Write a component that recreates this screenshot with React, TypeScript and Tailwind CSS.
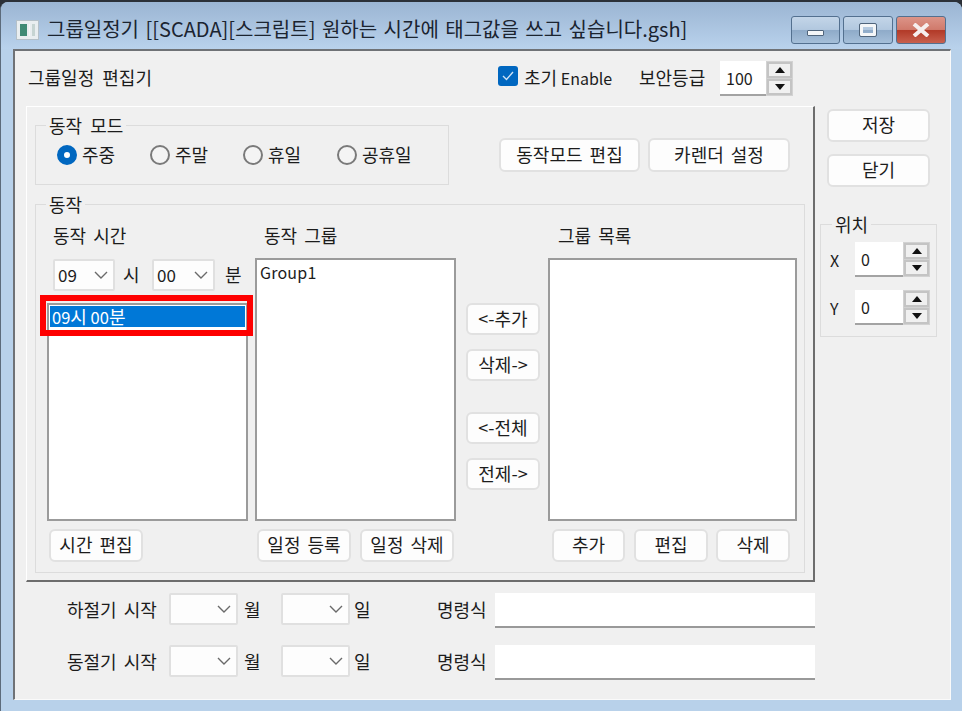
import type { ReactNode } from 'react';

const INK = 'text-[#1c1c1c]';

function Ko({ children }: { children: ReactNode }) {
  return <span className="text-[18px]">{children}</span>;
}

function Btn({ w, h = 'h-[33px]', children }: { w: string; h?: string; children: ReactNode }) {
  return (
    <div className={`${w} ${h} shrink-0 flex items-center justify-center rounded-[6px] border-2 border-[#e1e1e1] bg-[#fdfdfd] text-[18px] pb-[2px] ${INK} [word-spacing:3px]`}>
      {children}
    </div>
  );
}

function Chevron() {
  return (
    <svg width="14" height="8" viewBox="0 0 14 8" className="shrink-0">
      <polyline points="1,1 7,7 13,1" fill="none" stroke="#6a6a6a" strokeWidth="1.4" />
    </svg>
  );
}

function Combo({ w, value }: { w: string; value?: string }) {
  return (
    <div className={`${w} h-[32px] shrink-0 flex items-center justify-between pl-[3px] pr-[5px] bg-[#fdfdfd] border-2 border-[#e0e0e0] rounded-[2px] text-[17px] ${INK}`}>
      <span>{value}</span>
      <Chevron />
    </div>
  );
}

function SpinArrow({ up }: { up?: boolean }) {
  return (
    <div className="flex-1 flex items-center justify-center bg-[#f0f0f0] border-2 border-[#c4c4c4]">
      <svg width="10" height="6" viewBox="0 0 10 6">
        <polygon points={up ? '5,0 10,6 0,6' : '0,0 10,0 5,6'} fill="#111" />
      </svg>
    </div>
  );
}

function Spin({ inputW, value }: { inputW: string; value: string }) {
  return (
    <div className="flex h-[35px]">
      <div className={`${inputW} flex items-center pl-[6px] bg-white border-b-2 border-[#a3a3a3] text-[16px] ${INK}`}>{value}</div>
      <div className="w-[27px] flex flex-col gap-[1px] bg-[#d2d2d2] p-[1px]">
        <SpinArrow up />
        <SpinArrow />
      </div>
    </div>
  );
}

function Radio({ checked, label, w }: { checked?: boolean; label: string; w: string }) {
  return (
    <div className={`${w} flex items-center gap-[5px] text-[18px] ${INK}`}>
      {checked ? (
        <span className="w-[20px] h-[20px] rounded-full border-[7px] border-[#0067c0] bg-white shrink-0" />
      ) : (
        <span className="w-[20px] h-[20px] rounded-full border-2 border-[#7a7a7a] bg-[#f4f4f4] shrink-0" />
      )}
      <span className="mt-[-2px]">{label}</span>
    </div>
  );
}

function ListBox({ w, h, children }: { w: string; h: string; children?: ReactNode }) {
  return (
    <div className={`${w} ${h} bg-white border-2 border-[#9b9b9b] text-[16px] ${INK}`}>{children}</div>
  );
}

function WinBtn({ w, tone, children }: { w: string; tone: string; children: ReactNode }) {
  return (
    <div className={`${w} h-[28px] flex items-center justify-center rounded-[3px] border border-[#53708f] ${tone}`}>
      {children}
    </div>
  );
}

function SeasonRow({ label, mt }: { label: string; mt: string }) {
  return (
    <div className={`flex items-start h-[35px] ${mt} text-[18px] ${INK}`}>
      <div className="ml-[52px] w-[102px] h-[32px] leading-[32px] [word-spacing:3px]">{label}</div>
      <Combo w="w-[69px]" />
      <div className="ml-[6px] w-[37px] h-[32px] leading-[32px]">월</div>
      <Combo w="w-[69px]" />
      <div className="ml-[4px] w-[83px] h-[32px] leading-[32px]">일</div>
      <div className="w-[58px] h-[32px] leading-[32px]">명령식</div>
      <div className="w-[320px] h-[35px] bg-white border-b-2 border-[#999]" />
    </div>
  );
}

export default function App() {
  return (
    <div className="w-[962px] h-[711px] bg-[#2b3038] overflow-hidden font-['Noto_Sans_CJK_KR',sans-serif]">
      <div className="mt-[2px] h-[709px] rounded-t-[8px] bg-[#b8d1ea] border-l border-[#5c6b7b] overflow-hidden">
        {/* title bar */}
        <div className="h-[47px] pt-[8px] flex items-center bg-gradient-to-b from-[#9bb5d3] to-[#b9d2ec]">
          <div className="ml-[15px] w-[23px] h-[20px] flex gap-[2px] p-[3px] bg-[#e9eef0] border border-[#b4c0c8]">
            <div className="w-[7px] bg-[#3f8a74]" />
            <div className="flex-1 bg-[#f4f6f6]" />
            <div className="w-[3px] bg-[#c6d4d2]" />
          </div>
          <div className="ml-[8px] w-[744px] text-[20px] leading-[28px] mt-[-1px] text-[#1b2430] whitespace-nowrap [word-spacing:2px]">
            그룹일정기 [[SCADA][스크립트] 원하는 시간에 태그값을 쓰고 싶습니다.gsh]
          </div>
          <div className="flex gap-[3px] mt-[1px]">
            <WinBtn w="w-[49px]" tone="bg-[linear-gradient(#c3d5e8_0%,#b2c8df_48%,#8fabc9_52%,#a5bfd9_100%)]">
              <span className="block w-[17px] h-[6px] bg-[#f4f6f8] border border-[#50657c] rounded-[1px] mt-[6px]" />
            </WinBtn>
            <WinBtn w="w-[50px]" tone="bg-[linear-gradient(#c3d5e8_0%,#b2c8df_48%,#8fabc9_52%,#a5bfd9_100%)]">
              <span className="block w-[16px] h-[12px] border-[3px] border-[#f4f6f8] outline outline-1 outline-[#50657c] rounded-[1px]" />
            </WinBtn>
            <WinBtn w="w-[50px]" tone="bg-[linear-gradient(#dc9488_0%,#d07a6c_48%,#b23a28_52%,#c8604e_100%)] border-[#7a3a38]">
              <svg width="22" height="14" viewBox="0 0 22 14">
                <path d="M4 1 L18 13 M18 1 L4 13" stroke="#f6eeee" strokeWidth="4" />
              </svg>
            </WinBtn>
          </div>
        </div>

        {/* client area */}
        <div className="ml-[12px] w-[938px] h-[651px] bg-[#f0f0f0] border-l-2 border-t-2 border-[#6f7276] border-r border-r-[#fafafa] border-b border-b-[#fafafa]">
          <div className="h-[55px] flex items-center">
            <div className={`ml-[13px] w-[470px] text-[18px] mt-[-2px] ${INK} [word-spacing:4px]`}>그룹일정 편집기</div>
            <div className="w-[20px] h-[20px] mt-[-6px] rounded-[3px] bg-[#0067c0] flex items-center justify-center">
              <svg width="12" height="10" viewBox="0 0 12 10">
                <polyline points="1,5 4.5,8.5 11,1" fill="none" stroke="#cfe3f5" strokeWidth="1.4" />
              </svg>
            </div>
            <div className={`ml-[6px] w-[115px] text-[16px] mt-[-2px] ${INK}`}><Ko>초기</Ko> Enable</div>
            <div className={`w-[81px] text-[18px] mt-[-2px] ${INK}`}>보안등급</div>
            <Spin inputW="w-[46px]" value="100" />
          </div>

          <div className="flex">
            {/* main panel */}
            <div className="ml-[11px] w-[789px] h-[476px] border-l border-t border-white border-r-2 border-r-[#6d6d6d] border-b-2 border-b-[#6d6d6d]">
              <div className="flex pl-[8px] pt-[8px]">
                <fieldset className="w-[414px] h-[70px] border border-[#dcdcdc]">
                  <legend className={`ml-[10px] px-[3px] h-[20px] leading-[20px] text-[18px] ${INK} [word-spacing:4px]`}>동작 모드</legend>
                  <div className="flex items-center h-[40px] pl-[21px]">
                    <Radio checked label="주중" w="w-[93px]" />
                    <Radio label="주말" w="w-[93px]" />
                    <Radio label="휴일" w="w-[94px]" />
                    <Radio label="공휴일" w="w-[90px]" />
                  </div>
                </fieldset>
                <div className="ml-[50px] mt-[23px] flex gap-[8px]">
                  <Btn w="w-[141px]" h="h-[34px]">동작모드 편집</Btn>
                  <Btn w="w-[142px]" h="h-[34px]">카렌더 설정</Btn>
                </div>
              </div>

              <fieldset className="ml-[8px] mt-[9px] w-[770px] h-[379px] border border-[#dcdcdc]">
                <legend className={`ml-[10px] px-[3px] h-[20px] leading-[20px] text-[18px] ${INK}`}>동작</legend>
                <div className="flex pl-[11px]">
                  {/* time column */}
                  <div className="relative w-[201px] shrink-0">
                    <div className={`h-[43px] flex items-center pl-[6px] text-[18px] ${INK} [word-spacing:3px]`}>동작 시간</div>
                    <div className={`flex items-center h-[33px] mt-[1px] pl-[6px] text-[18px] ${INK}`}>
                      <Combo w="w-[62px]" value="09" />
                      <span className="ml-[8px] w-[29px]">시</span>
                      <Combo w="w-[63px]" value="00" />
                      <span className="ml-[10px]">분</span>
                    </div>
                    <div className="mt-[12px]">
                      <ListBox w="w-[201px]" h="h-[218px]">
                        <div className="mx-[1px] mt-[1px] h-[21px] leading-[21px] pl-[2px] bg-[#0078d7] text-white text-[16.5px]">09<Ko>시</Ko> 00<Ko>분</Ko></div>
                      </ListBox>
                    </div>
                    <div className="mt-[8px] ml-[2px]">
                      <Btn w="w-[94px]">시간 편집</Btn>
                    </div>
                    <div className="absolute left-[-7px] top-[81px] w-[213px] h-[41px] border-[6px] border-[#fe0000]" />
                  </div>

                  {/* group column */}
                  <div className="ml-[7px] w-[201px] shrink-0">
                    <div className={`h-[43px] mb-[1px] flex items-center pl-[9px] text-[18px] ${INK} [word-spacing:3px]`}>동작 그룹</div>
                    <ListBox w="w-[201px]" h="h-[263px]">
                      <div className="pl-[3px] h-[24px] leading-[24px] tracking-[0.2px]">Group1</div>
                    </ListBox>
                    <div className="mt-[8px] ml-[2px] flex gap-[9px]">
                      <Btn w="w-[94px]">일정 등록</Btn>
                      <Btn w="w-[94px]">일정 삭제</Btn>
                    </div>
                  </div>

                  {/* move buttons */}
                  <div className="ml-[10px] w-[74px] shrink-0 pt-[89px]">
                    <Btn w="w-[74px]" h="h-[32px]">&lt;-추가</Btn>
                    <div className="mt-[14px]"><Btn w="w-[74px]" h="h-[32px]">삭제-&gt;</Btn></div>
                    <div className="mt-[31px]"><Btn w="w-[74px]" h="h-[32px]">&lt;-전체</Btn></div>
                    <div className="mt-[14px]"><Btn w="w-[74px]" h="h-[32px]">전제-&gt;</Btn></div>
                  </div>

                  {/* list column */}
                  <div className="ml-[8px] w-[249px] shrink-0">
                    <div className={`h-[43px] mb-[1px] flex items-center pl-[10px] text-[18px] ${INK} [word-spacing:3px]`}>그룹 목록</div>
                    <ListBox w="w-[249px]" h="h-[263px]" />
                    <div className="mt-[8px] ml-[4px] flex">
                      <Btn w="w-[73px]">추가</Btn>
                      <div className="ml-[9px]"><Btn w="w-[74px]">편집</Btn></div>
                      <div className="ml-[8px]"><Btn w="w-[74px]">삭제</Btn></div>
                    </div>
                  </div>
                </div>
              </fieldset>
            </div>

            {/* right column */}
            <div className="ml-[5px] w-[117px] shrink-0 pt-[3px]">
              <div className="pl-[7px]"><Btn w="w-[103px]">저장</Btn></div>
              <div className="pl-[7px] mt-[12px]"><Btn w="w-[103px]">닫기</Btn></div>
              <fieldset className="mt-[27px] w-[117px] h-[123px] border border-[#dcdcdc]">
                <legend className={`ml-[11px] px-[3px] h-[20px] leading-[20px] text-[18px] ${INK}`}>위치</legend>
                <div className={`flex items-center h-[35px] mt-[8px] pl-[9px] text-[16px] ${INK}`}>
                  <span className="w-[25px]">X</span>
                  <Spin inputW="w-[48px]" value="0" />
                </div>
                <div className={`flex items-center h-[35px] mt-[13px] pl-[9px] text-[16px] ${INK}`}>
                  <span className="w-[25px]">Y</span>
                  <Spin inputW="w-[48px]" value="0" />
                </div>
              </fieldset>
            </div>
          </div>

          <SeasonRow label="하절기 시작" mt="mt-[11px]" />
          <SeasonRow label="동절기 시작" mt="mt-[17px]" />
        </div>
      </div>
    </div>
  );
}
